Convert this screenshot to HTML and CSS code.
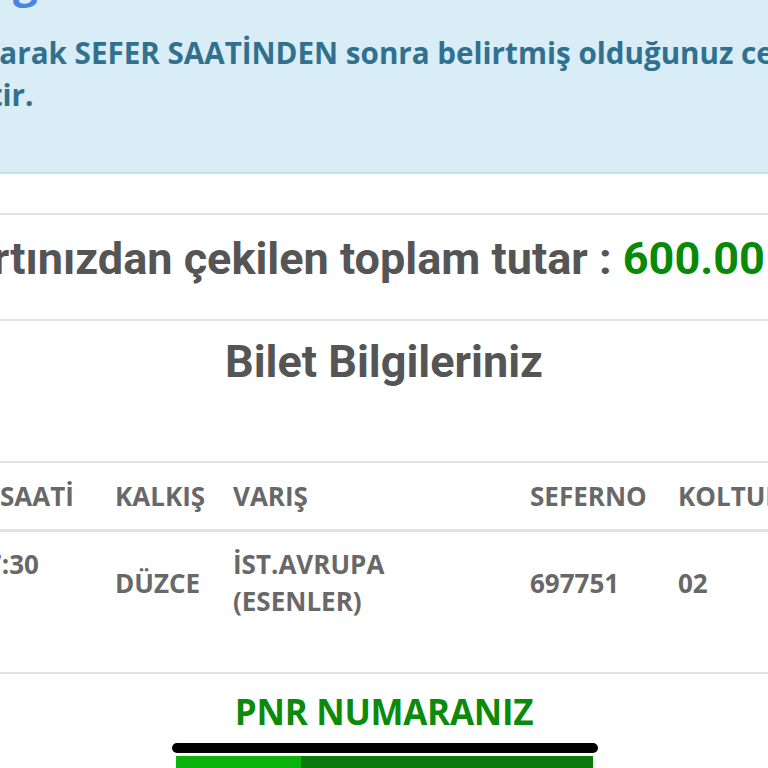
FILE: index.html
```html
<!DOCTYPE html>
<html lang="tr">
<head>
<meta charset="utf-8">
<link rel="stylesheet" href="styles.css">
</head>
<body>
<div class="page">
  <div class="alert">
    <div class="alert-head">g</div>
    <p class="alert-line line-one">olarak SEFER SAATİNDEN sonra belirtmiş olduğunuz cep telefonunuza</p>
    <p class="alert-line line-two">gönderilecektir.</p>
  </div>
  <div class="spacer"></div>
  <div class="total"><span class="total-text">Kartınızdan çekilen toplam tutar : <span class="amount">600.00 TL</span></span></div>
  <div class="title-block"><h2 class="title">Bilet Bilgileriniz</h2></div>
  <div class="ticket">
    <div class="row head">
      <div class="cell c1">SAATİ</div>
      <div class="cell">KALKIŞ</div>
      <div class="cell">VARIŞ</div>
      <div class="cell">SEFERNO</div>
      <div class="cell">KOLTUK</div>
    </div>
    <div class="row data">
      <div class="cell c1 time">17:30</div>
      <div class="cell">DÜZCE</div>
      <div class="cell">İST.AVRUPA<br>(ESENLER)</div>
      <div class="cell">697751</div>
      <div class="cell">02</div>
    </div>
  </div>
  <div class="pnr">
    <div class="pnr-title">PNR NUMARANIZ</div>
    <div class="pnr-bar"><span class="pnr-bar-light"></span><span class="pnr-bar-dark"></span></div>
  </div>
  <div class="home-indicator"></div>
</div>
</body>
</html>
```
FILE: styles.css
```css
html, body {
  margin: 0;
  padding: 0;
  background: #ffffff;
}
.page {
  position: relative;
  width: 768px;
  height: 768px;
  overflow: hidden;
  background: #ffffff;
}
.alert {
  height: 172px;
  background: #d9edf7;
  border-bottom: 2px solid #c4e2ee;
  overflow: hidden;
  font-family: "Open Sans", "Liberation Sans", sans-serif;
  font-weight: 700;
  color: #31708f;
}
.alert-head {
  font-size: 44px;
  line-height: 44px;
  height: 44px;
  color: #4d84e3;
  margin-top: -42px;
  margin-left: 13px;
}
.alert-line {
  margin: 0;
  white-space: nowrap;
  font-size: 29.6px;
  line-height: 42px;
}
.line-one {
  margin-top: 30px;
  margin-left: -28px;
}
.line-two {
  margin-left: -201px;
}
.spacer {
  height: 39px;
}
.total {
  border-top: 2px solid #e2e2e2;
  height: 106px;
  box-sizing: border-box;
  padding-bottom: 18px;
  display: flex;
  align-items: center;
  white-space: nowrap;
  font-family: Roboto, "Liberation Sans", sans-serif;
  font-weight: 700;
  font-size: 45px;
  color: #555555;
}
.total-text {
  margin-left: -60px;
}
.amount {
  color: #078a07;
}
.title-block {
  border-top: 2px solid #e2e2e2;
  height: 140px;
}
.title {
  margin: 0;
  padding-top: 15px;
  text-align: center;
  font-family: Roboto, "Liberation Sans", sans-serif;
  font-weight: 700;
  font-size: 45px;
  line-height: 52px;
  color: #555555;
}
.ticket {
  font-family: "Open Sans", "Liberation Sans", sans-serif;
  font-weight: 700;
  font-size: 26px;
  color: #686868;
}
.row {
  display: grid;
  grid-template-columns: 115px 118px 297px 148px 90px;
  white-space: nowrap;
}
.head {
  border-top: 2px solid #e2e2e2;
  height: 66px;
  align-items: center;
}
.data {
  border-top: 3px solid #e2e2e2;
  border-bottom: 2px solid #e2e2e2;
  height: 145px;
  box-sizing: border-box;
  padding: 14px 0 55px;
  align-items: center;
  line-height: 37px;
}
.data .c1 {
  align-self: start;
}
.time {
  text-indent: -28px;
}
.pnr {
  display: flex;
  flex-direction: column;
  align-items: center;
}
.pnr-title {
  margin-top: 18px;
  font-family: "Open Sans", "Liberation Sans", sans-serif;
  font-weight: 700;
  font-size: 35px;
  line-height: 40px;
  color: #0c8a0c;
  letter-spacing: -0.3px;
}
.pnr-bar {
  margin-top: 23px;
  width: 417px;
  height: 20px;
  display: flex;
}
.pnr-bar-light {
  width: 125px;
  background: #0db30d;
}
.pnr-bar-dark {
  flex: 1;
  background: #0a7a0a;
}
.home-indicator {
  position: absolute;
  left: 172px;
  top: 743px;
  width: 426px;
  height: 10px;
  border-radius: 5px;
  background: #000000;
  box-shadow: 0 2px 0 1px #ffffff;
}
```
